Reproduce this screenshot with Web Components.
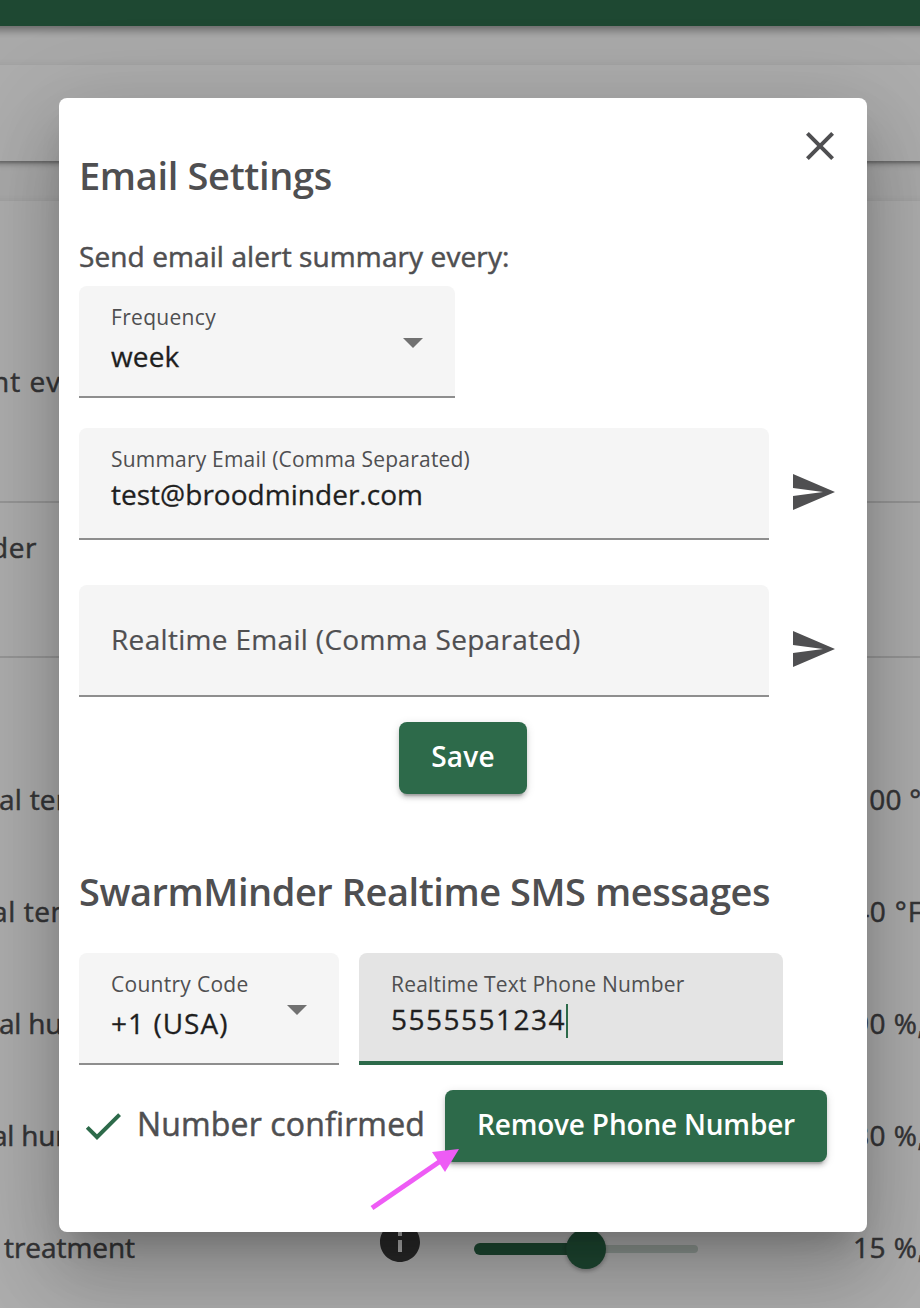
<!DOCTYPE html>
<html lang="en">
<head>
<meta charset="utf-8">
<title>Email Settings</title>
<style>
html,body{margin:0;height:100%;overflow:hidden}
body{font-family:"Open Sans","Noto Sans",sans-serif;color:#4f4f51;--green:#2d6a4a}
</style>
</head>
<body>
<app-backdrop></app-backdrop>
<settings-dialog></settings-dialog>
<script>
const define = (name, html, setup) => customElements.define(name, class extends HTMLElement {
  connectedCallback() {
    if (this.shadowRoot) return;
    const t = document.createElement('template');
    t.innerHTML = html;
    this.attachShadow({mode: 'open'}).append(t.content.cloneNode(true));
    if (setup) setup.call(this, this.shadowRoot);
  }
});

// Single line of text tracked out to the width given in "w".
define('tracked-text', `<style>:host{display:block;white-space:nowrap}span{display:inline-block}</style><span><slot></slot></span>`, function (r) {
  const w = +this.getAttribute('w');
  if (!w) return;
  const s = r.querySelector('span');
  s.style.letterSpacing = (w - s.getBoundingClientRect().width) / this.textContent.length + 'px';
});

define('app-icon', `<style>:host{display:block;width:48px;height:48px;flex:none}svg{display:block;width:100%;height:100%}</style><svg viewBox="0 0 24 24" fill="currentColor"><path/></svg>`, function (r) {
  r.querySelector('path').setAttribute('d', {
    close: 'M19 6.41L17.59 5 12 10.59 6.41 5 5 6.41 10.59 12 5 17.59 6.41 19 12 13.41 17.59 19 19 17.59 13.41 12z',
    send: 'M2.01 21L23 12 2.01 3 2 10l15 2-15 2z',
    check: 'M9 16.17L4.83 12l-1.42 1.41L9 19 21 7l-1.41-1.41z',
    info: 'M12 2C6.48 2 2 6.48 2 12s4.48 10 10 10 10-4.48 10-10S17.52 2 12 2zm1 15h-2v-6h2v6zm0-8h-2V7h2v2z'
  }[this.getAttribute('name')]);
});

define('app-button', `<style>
:host{display:flex;box-sizing:border-box;height:72px;justify-content:center;padding-top:18px;border-radius:8px;background:var(--green);color:#fff;font-size:28px;line-height:32px;font-weight:600;
box-shadow:0 6px 2px -4px rgba(0,0,0,.2),0 4px 4px rgba(0,0,0,.14),0 2px 10px rgba(0,0,0,.12)}
</style><slot></slot>`);

define('form-field', `<style>
:host{display:flex;justify-content:space-between;box-sizing:border-box;height:112px;padding:19px 32px 0;border-radius:8px 8px 0 0;background:#f5f5f5;border-bottom:2px solid #8e8e8e}
:host([focused]){background:#e4e4e4;border-bottom:4px solid var(--green)}
.label{font-size:21px;line-height:24px}
.value{display:flex;margin-top:7px;font-size:28px;line-height:32px;color:#1f1f1f;-webkit-text-stroke:.3px}
:host([select]) .value{margin-top:11px}
:host([empty]) .label{font-size:28px;line-height:32px;padding-top:19px;-webkit-text-stroke:.2px}
:host([empty]) .value{display:none}
.arrow{display:none;margin-top:33px;width:20px;height:10px;background:#717171;clip-path:polygon(0 0,100% 0,50% 100%)}
:host([select]) .arrow{display:block}
.caret{display:none;width:2px;height:34px;margin-top:1px;background:var(--green)}
:host([focused]) .caret{display:block}
</style><div><div class="label"><slot name="label"></slot></div><div class="value"><slot></slot><i class="caret"></i></div></div><i class="arrow"></i>`);

define('value-slider', `<style>
:host{display:grid;grid-template-columns:112px 112px;align-items:center;width:224px;height:40px}
b{grid-area:1/1;height:12px;border-radius:6px 0 0 6px;background:var(--green)}
i{grid-area:1/2;height:8px;border-radius:0 4px 4px 0;background:#cddbd3}
u{grid-area:1/1/2/3;justify-self:center;width:40px;height:40px;border-radius:50%;background:var(--green);box-shadow:0 2px 4px rgba(0,0,0,.3)}
</style><b></b><i></i><u></u>`);

define('setting-row', `<style>
:host{display:grid;grid-template-columns:380px 94px 379px 1fr;align-items:center;height:112px;font-size:28px;line-height:32px;white-space:nowrap;-webkit-text-stroke:.5px}
.name{margin-left:var(--x,0px)}
::slotted(app-icon){margin:-12px 0 0 -4px;padding-top:2px;color:#3d3d3d;-webkit-text-stroke:0}
::slotted(value-slider){margin-top:4px}
</style><div class="name"><slot></slot></div><div><slot name="icon"></slot></div><div><slot name="control"></slot></div><div><slot name="value"></slot></div>`);

define('app-backdrop', `<style>
:host{display:block;position:relative;height:1308px;background:#fafafa;overflow:hidden}
header{height:26px;margin:0 -20px;background:var(--green);box-shadow:0 4px 8px rgba(0,0,0,.4)}
.card{margin:0 -20px;padding:0 20px;background:#fff;box-shadow:0 6px 2px -4px rgba(0,0,0,.2),0 4px 4px rgba(0,0,0,.14),0 2px 10px rgba(0,0,0,.12)}
.summary{height:96px;margin-top:39px}
.settings{height:1200px;margin-top:40px}
.top{height:300px;border-bottom:2px solid #dedede}
.top setting-row{height:360px}
.mid{height:153px;border-bottom:2px solid #dedede}
.mid setting-row{height:88px}
.rows{padding-top:85px}
.scrim{position:absolute;inset:0;background:rgba(0,0,0,.32)}
</style>
<header></header>
<section class="card summary"></section>
<section class="card settings">
<div class="top"><setting-row style="--x:-8px"><tracked-text w="86">nt eve</tracked-text></setting-row></div>
<div class="mid"><setting-row style="--x:-9px"><tracked-text w="46">der</tracked-text></setting-row></div>
<div class="rows">
<setting-row style="--x:-1px"><tracked-text w="83">al tem</tracked-text><tracked-text slot="value" w="83">100 °F</tracked-text></setting-row>
<setting-row style="--x:-8px"><tracked-text w="85">al tem</tracked-text><tracked-text slot="value" w="70">40 °F</tracked-text></setting-row>
<setting-row style="--x:-1px"><tracked-text w="89">al hum</tracked-text><tracked-text slot="value" w="72">90 %,</tracked-text></setting-row>
<setting-row style="--x:-8px"><tracked-text w="89">al hum</tracked-text><tracked-text slot="value" w="72">80 %,</tracked-text></setting-row>
<setting-row style="--x:4px"><tracked-text w="131">treatment</tracked-text><app-icon slot="icon" name="info"></app-icon><value-slider slot="control"></value-slider><tracked-text slot="value" w="72">15 %,</tracked-text></setting-row>
</div>
</section>
<div class="scrim"></div>`);

define('settings-dialog', `<style>
:host{display:flex;flex-direction:column;position:absolute;left:59px;top:98px;box-sizing:border-box;width:808px;height:1134px;padding:24px 20px 0;background:#fff;border-radius:8px;
box-shadow:0 22px 30px -14px rgba(0,0,0,.2),0 48px 76px 6px rgba(0,0,0,.14),0 18px 92px 16px rgba(0,0,0,.12)}
header{display:flex;justify-content:space-between;align-items:flex-start;padding-right:3.5px}
h2{margin:0;font-size:38px;line-height:48px;font-weight:600}
header h2{margin-top:29px}
.intro{margin-top:41px;font-size:28px;line-height:32px;-webkit-text-stroke:.5px}
.freq{width:376px;margin-top:14px}
.line{display:flex;gap:20px}
.line form-field{width:690px}
.line app-icon{margin-top:40px}
.save{width:128px;margin:25px auto 0}
.phone{display:flex;gap:20px;margin-top:38px}
.status{display:flex;margin-top:25px}
.status app-icon{margin-top:12px;color:var(--green)}
.ok{width:308px;margin:14px 0 0 10px;font-size:32px;line-height:40px;-webkit-text-stroke:.5px}
.remove{width:382px}
.pointer{position:absolute;left:306px;top:1044px}
</style>
<header><h2><tracked-text w="253">Email Settings</tracked-text></h2><app-icon name="close"></app-icon></header>
<tracked-text class="intro" w="430.5">Send email alert summary every:</tracked-text>
<form-field class="freq" select><tracked-text slot="label" w="105">Frequency</tracked-text><tracked-text w="68.5">week</tracked-text></form-field>
<div class="line" style="margin-top:30px"><form-field><tracked-text slot="label" w="359">Summary Email (Comma Separated)</tracked-text><tracked-text w="312">test@broodminder.com</tracked-text></form-field><app-icon name="send"></app-icon></div>
<div class="line" style="margin-top:45px"><form-field empty><tracked-text slot="label" w="469.5">Realtime Email (Comma Separated)</tracked-text></form-field><app-icon name="send"></app-icon></div>
<app-button class="save"><tracked-text w="63.5">Save</tracked-text></app-button>
<h2 style="margin-top:73px"><tracked-text w="691">SwarmMinder Realtime SMS messages</tracked-text></h2>
<div class="phone">
<form-field select style="width:260px"><tracked-text slot="label" w="137.5">Country Code</tracked-text><tracked-text w="117.5">+1 (USA)</tracked-text></form-field>
<form-field focused style="width:424px"><tracked-text slot="label" w="293.5">Realtime Text Phone Number</tracked-text><tracked-text w="175">5555551234</tracked-text></form-field>
</div>
<div class="status"><app-icon name="check"></app-icon><div class="ok"><tracked-text w="288">Number confirmed</tracked-text></div><app-button class="remove"><tracked-text w="318">Remove Phone Number</tracked-text></app-button></div>
<svg class="pointer" width="100" height="74" viewBox="0 0 100 74" fill="#ee5cf5"><path d="M7 66L77 18" stroke="#ee5cf5" stroke-width="5"/><path d="M94 7L67 10L80 30z"/></svg>`);
</script>
</body>
</html>
